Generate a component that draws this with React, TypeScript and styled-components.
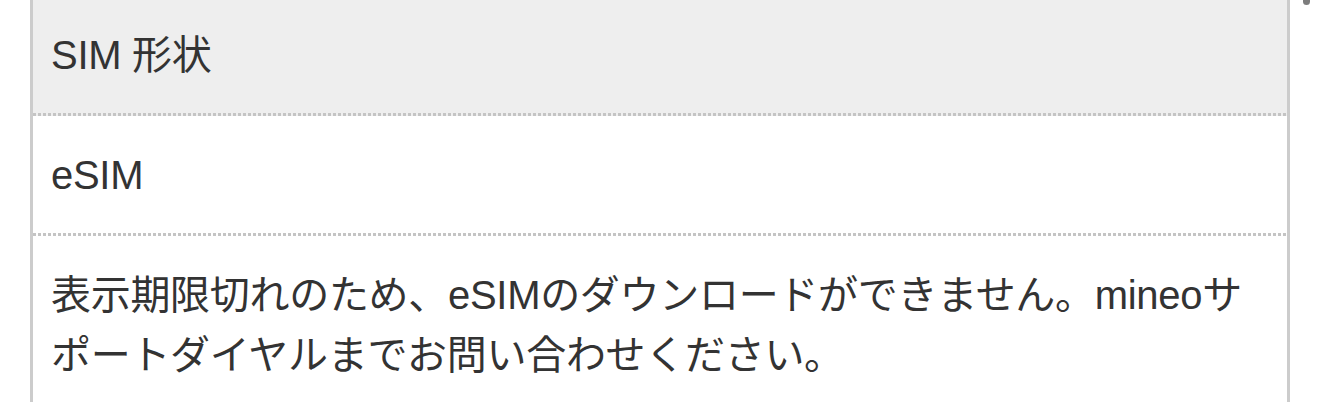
import styled, { createGlobalStyle } from 'styled-components'

const GlobalStyle = createGlobalStyle`
  html, body {
    margin: 0;
    padding: 0;
    background: #ffffff;
    overflow: hidden;
  }
  body {
    font-family: "Liberation Sans", "Noto Sans CJK JP", sans-serif;
    color: #333333;
  }
`

const Page = styled.main`
  width: 100%;
  margin-top: -4px; /* page is scrolled a little */
`

const Table = styled.section`
  width: 1260px;
  margin-left: 30px;
  border-left: 3px solid #cccccc;
  border-right: 3px solid #cccccc;
  box-sizing: border-box;
`

const Cell = styled.div<{ $head?: boolean }>`
  padding: 28.5px 18px;
  font-size: 40px;
  line-height: 60px;
  letter-spacing: -0.3px;
  border-bottom: 3px solid transparent;
  background:
    repeating-linear-gradient(90deg, #c4c4c4 0 3px, transparent 3px 5px) left bottom / 100% 3px no-repeat border-box,
    ${(p) => (p.$head ? '#eeeeee' : '#ffffff')};
  background-origin: border-box;
`

const ScrollThumb = styled.div`
  position: fixed;
  top: -20px;
  right: 10px;
  width: 7px;
  height: 25px;
  border-radius: 4px;
  background: #7d7d7d;
`

export default function App() {
  return (
    <>
      <GlobalStyle />
      <Page>
        <Table>
          <Cell $head>SIM 形状</Cell>
          <Cell>eSIM</Cell>
          <Cell>
            表示期限切れのため、eSIMのダウンロードができません。mineoサポートダイヤルまでお問い合わせください。
          </Cell>
        </Table>
      </Page>
      <ScrollThumb />
    </>
  )
}
